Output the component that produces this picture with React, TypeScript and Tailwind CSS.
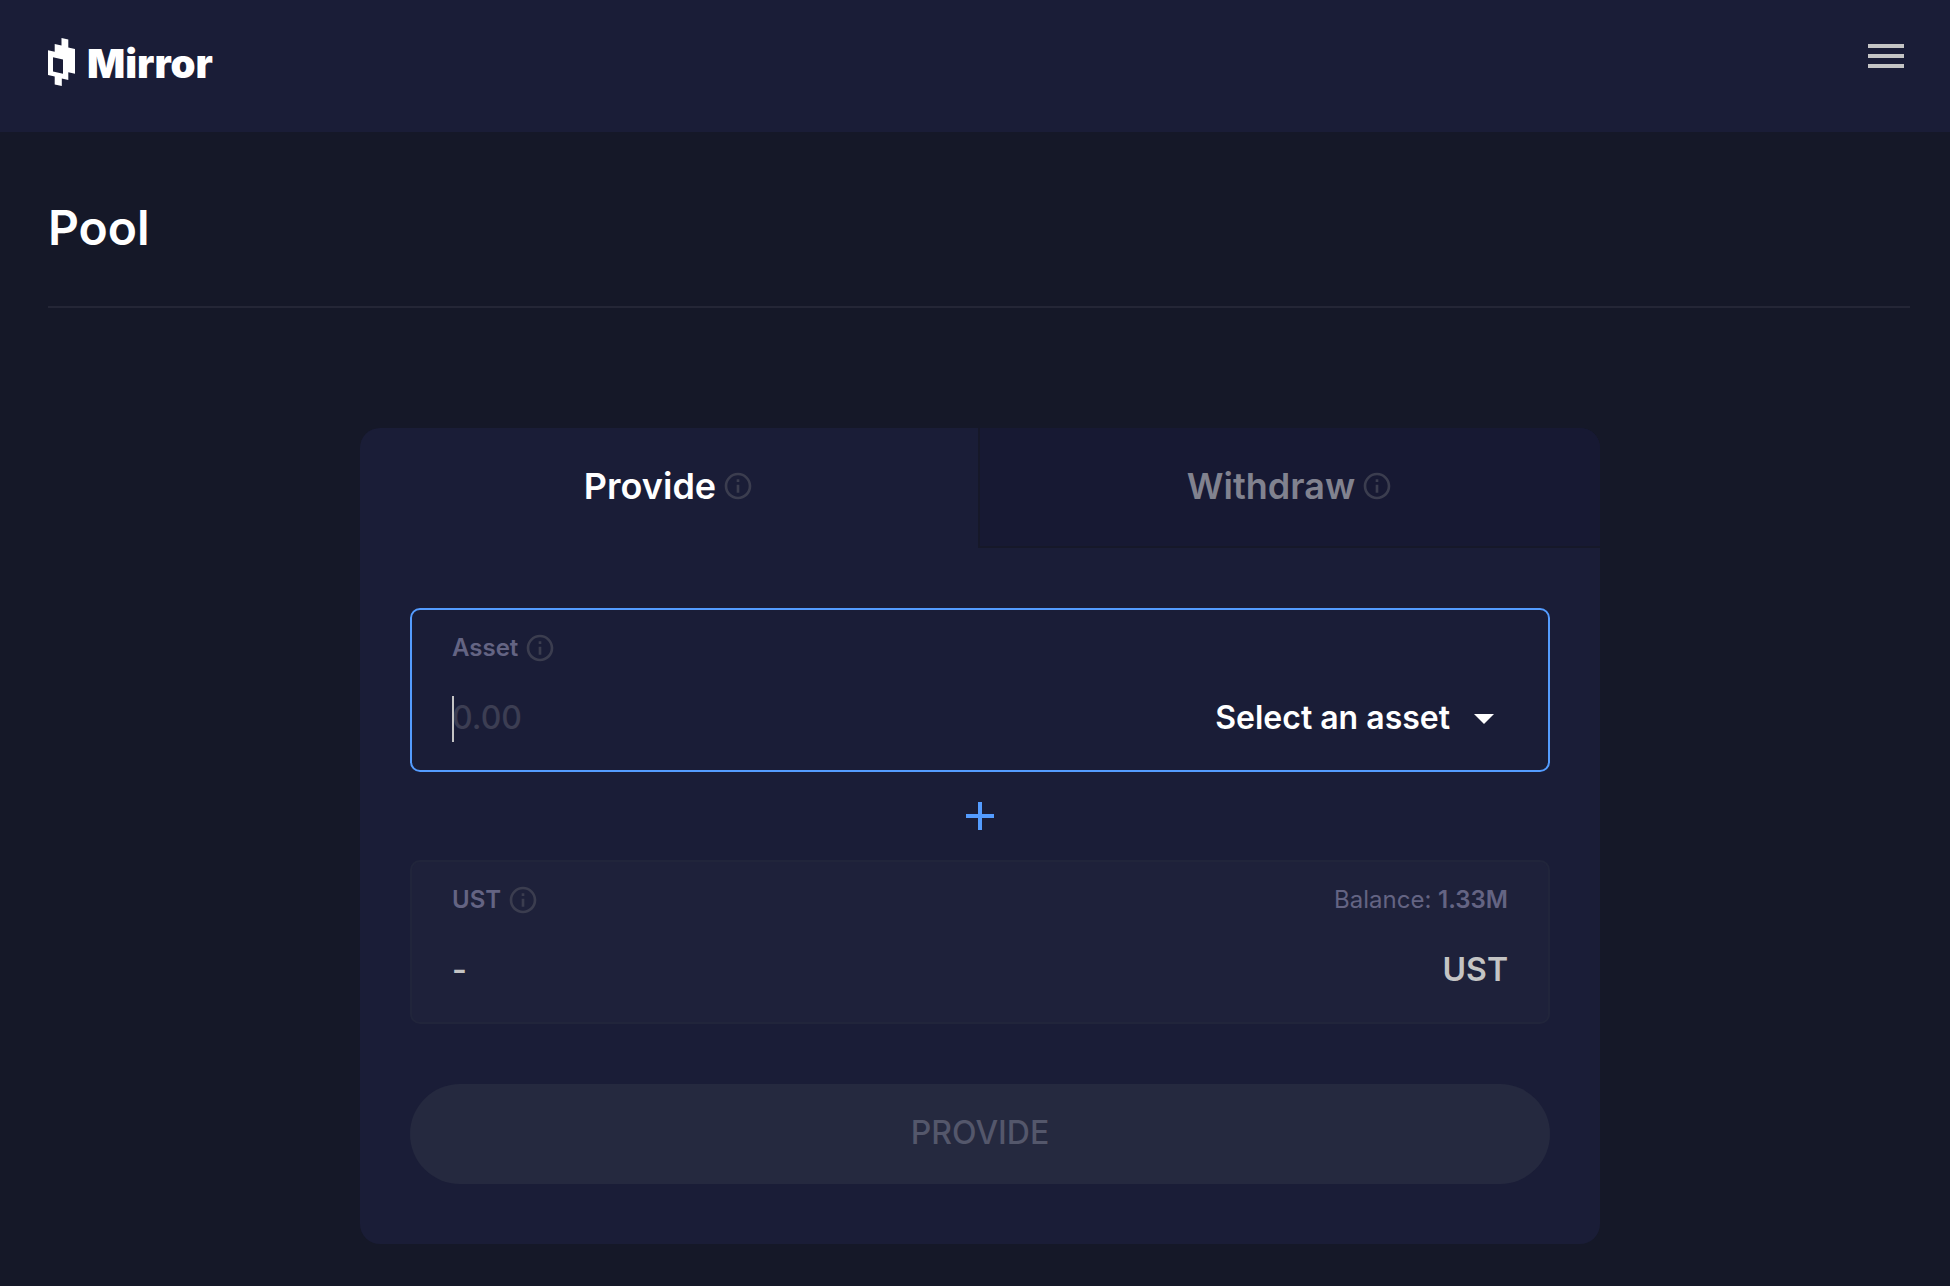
import { MdAdd, MdArrowDropDown, MdInfoOutline, MdMenu } from "react-icons/md";

function Info() {
  return <MdInfoOutline aria-hidden="true" className="size-8 shrink-0 text-[#3b3d4f]" />;
}

function Logo() {
  return (
    <a href="#" className="flex items-start gap-3 text-white">
      <svg viewBox="0 0 27 48" className="h-12 w-[27px]" fill="currentColor" aria-hidden="true">
        <path
          fillRule="evenodd"
          d="M0 12.3 6.7 13.8V6L13.5 7.6V0L20.3 1.6V9.6L27 11.1V35.7L20.3 34.2V42L13.8 40.5V48L6.7 46.4V38.6L0 37ZM5 19.3V33.6L15 35.8V21.5Z"
        />
      </svg>
      <span className="pt-0.5 text-[40px] leading-[48px] font-black">Mirror</span>
    </a>
  );
}

export default function App() {
  return (
    <div className="min-h-screen bg-[#151828] font-['Inter',sans-serif] text-white">
      <header className="flex h-[132px] items-start justify-between bg-[#1a1d37] pt-8 pr-10 pl-12">
        <div className="pt-1.5">
          <Logo />
        </div>
        <button type="button" aria-label="Menu" className="text-[#c4c4c4]">
          <MdMenu className="size-12" />
        </button>
      </header>

      <main className="pr-10 pb-[42px] pl-12">
        <div className="border-b-2 border-[#242636] pt-16 pb-[46px]">
          <h1 className="text-[48px] leading-[64px] font-semibold">Pool</h1>
        </div>

        <div className="pt-[120px] pl-0.5">
          <section className="mx-auto max-w-[1240px] overflow-hidden rounded-[20px] bg-[#1a1d37]">
            <div role="tablist" className="grid h-[120px] grid-cols-2 text-4xl font-semibold">
              <button
                type="button"
                role="tab"
                aria-selected="true"
                className="flex items-center justify-center gap-1.5 pr-0.5 pb-1"
              >
                Provide
                <Info />
              </button>
              <button
                type="button"
                role="tab"
                aria-selected="false"
                className="-ml-0.5 flex items-center justify-center gap-1.5 border-b-2 border-l-2 border-[#161829] bg-[#171933] pb-0.5 text-[#81828f]"
              >
                Withdraw
                <Info />
              </button>
            </div>

            <form className="px-[50px] py-[60px]">
              <div className="rounded-[10px] border-2 border-[#549cff] px-10 pt-5 pb-7">
                <label htmlFor="amount" className="flex h-9 items-center gap-1.5 text-2xl font-semibold text-[#646483]">
                  Asset
                  <Info />
                </label>
                <div className="mt-7 flex h-12 items-center justify-between">
                  <div className="relative">
                    <input
                      id="amount"
                      placeholder="0.00"
                      className="w-full bg-transparent text-[32px] leading-[48px] font-medium outline-none placeholder:text-[#3c3e53]"
                    />
                    <span className="absolute top-0.5 left-0 h-[46px] w-0.5 bg-[#c4c4c4]" />
                  </div>
                  <button type="button" className="flex items-center gap-2.5 text-[32px] font-semibold">
                    Select an asset
                    <MdArrowDropDown className="size-12" />
                  </button>
                </div>
              </div>

              <MdAdd aria-hidden="true" className="mx-auto my-5 size-12 text-[#549cff]" />

              <div className="rounded-[10px] border-2 border-[#21253b] bg-[#1e213a] px-10 pt-5 pb-7">
                <div className="flex h-9 items-center justify-between text-2xl text-[#646483]">
                  <span className="flex items-center gap-1.5 font-semibold">
                    UST
                    <Info />
                  </span>
                  <span>
                    Balance: <strong className="font-semibold">1.33M</strong>
                  </span>
                </div>
                <div className="mt-7 flex h-12 items-center justify-between text-[32px] font-semibold text-[#c4c4c4]">
                  <span>-</span>
                  <span>UST</span>
                </div>
              </div>

              <button
                type="submit"
                disabled
                className="mt-[60px] h-[100px] w-full rounded-full bg-[#25293f] pb-0.5 text-[32px] font-medium text-[#54576b]"
              >
                PROVIDE
              </button>
            </form>
          </section>
        </div>
      </main>
    </div>
  );
}
